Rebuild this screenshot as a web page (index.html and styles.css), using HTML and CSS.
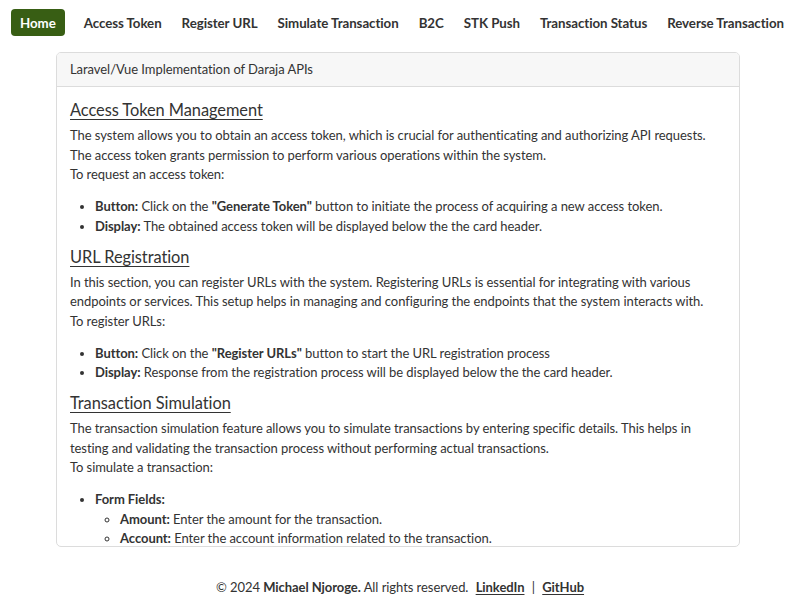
FILE: index.html
```html
<!DOCTYPE html>
<html lang="en">
<head>
<meta charset="utf-8">
<title>Daraja APIs</title>
<link rel="stylesheet" href="styles.css">
</head>
<body>
<nav class="nav">
  <a class="nav-link active" href="#">Home</a>
  <a class="nav-link" href="#">Access Token</a>
  <a class="nav-link" href="#">Register URL</a>
  <a class="nav-link" href="#">Simulate Transaction</a>
  <a class="nav-link" href="#">B2C</a>
  <a class="nav-link" href="#">STK Push</a>
  <a class="nav-link" href="#">Transaction Status</a>
  <a class="nav-link" href="#">Reverse Transaction</a>
</nav>
<main class="card">
  <div class="card-header">Laravel/Vue Implementation of Daraja APIs</div>
  <div class="card-body">
    <h2 class="title">Access Token Management</h2>
    <p>The system allows you to obtain an access token, which is crucial for authenticating and authorizing API requests.<br>The access token grants permission to perform various operations within the system.<br>To request an access token:</p>
    <ul>
      <li><b>Button:</b> Click on the <b>"Generate Token"</b> button to initiate the process of acquiring a new access token.</li>
      <li><b>Display:</b> The obtained access token will be displayed below the the card header.</li>
    </ul>
    <h2 class="title">URL Registration</h2>
    <p>In this section, you can register URLs with the system. Registering URLs is essential for integrating with various endpoints or services. This setup helps in managing and configuring the endpoints that the system interacts with.<br>To register URLs:</p>
    <ul>
      <li><b>Button:</b> Click on the <b>"Register URLs"</b> button to start the URL registration process</li>
      <li><b>Display:</b> Response from the registration process will be displayed below the the card header.</li>
    </ul>
    <h2 class="title">Transaction Simulation</h2>
    <p>The transaction simulation feature allows you to simulate transactions by entering specific details. This helps in testing and validating the transaction process without performing actual transactions.<br>To simulate a transaction:</p>
    <ul>
      <li><b>Form Fields:</b>
        <ul class="sub">
          <li><b>Amount:</b> Enter the amount for the transaction.</li>
          <li><b>Account:</b> Enter the account information related to the transaction.</li>
        </ul>
      </li>
    </ul>
  </div>
</main>
<footer class="footer">
  <span>&copy; 2024 <b>Michael Njoroge.</b> All rights reserved.</span>
  <a href="#">LinkedIn</a>
  <span class="sep">|</span>
  <a href="#">GitHub</a>
</footer>
</body>
</html>
```
FILE: styles.css
```css
html,body{margin:0;padding:0}
body{
  font-family:Lato,"Liberation Sans",sans-serif;
  font-size:13px;
  letter-spacing:-0.06px;
  color:#333;
  background:#fff;
  width:800px;
  height:606px;
  overflow:hidden;
}
.nav{
  display:flex;
  align-items:center;
  gap:20px;
  padding:9px 11px 0;
  height:27px;
}
.nav-link{
  font-weight:bold;
  font-size:13.3px;
  color:#333;
  text-decoration:none;
  padding-top:1px;
  line-height:26px;
  white-space:nowrap;
}
.nav-link.active{
  background:#385e14;
  color:#fff;
  padding:1px 9px 0;
  border-radius:4px;
  margin-right:-1px;
}
.card{
  margin:16px 60px 0 56px;
  height:493px;
  border:1px solid #dcdcdc;
  border-radius:5px;
  overflow:hidden;
  display:flex;
  flex-direction:column;
}
.card-header{
  background:#f7f7f7;
  border-bottom:1px solid #dcdcdc;
  height:33px;
  line-height:33px;
  padding:0 13px;
  flex:none;
}
.card-body{
  padding:12px 13px 0;
  overflow:hidden;
  line-height:19.5px;
}
.title{
  font-size:16.4px;
  font-weight:normal;
  text-decoration:underline;
  text-underline-offset:3px;
  text-decoration-thickness:1px;
  line-height:21px;
  margin:0 0 6px;
}
p{margin:0 0 12.5px}
ul{margin:0 0 9.5px;padding-left:25px}
ul.sub{margin:0;padding-left:25px;list-style:circle}
.footer{
  text-align:center;
  margin-top:30px;
  line-height:20px;
}
.footer a{
  color:#333;
  font-weight:bold;
  text-underline-offset:2px;
  margin-left:4px;
}
.footer .sep{margin-left:4px}
```
